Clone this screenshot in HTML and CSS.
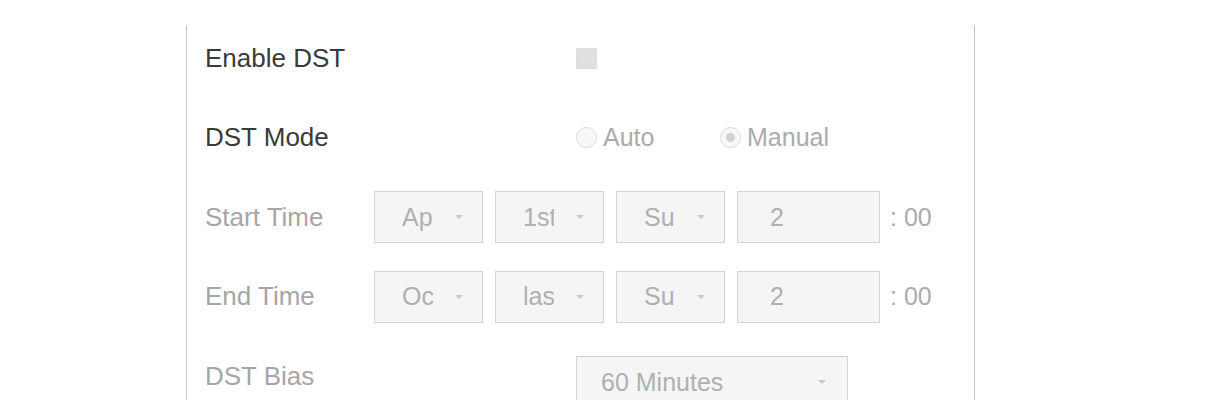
FILE: index.html
```html
<!DOCTYPE html>
<html lang="en">
<head>
  <meta charset="UTF-8" />
  <meta name="viewport" content="width=device-width, initial-scale=1.0"/>
  <title>DST Settings</title>
  <link rel="stylesheet" href="styles.css">
</head>
<body>

  <div class="panel">

    <div class="row">
      <div class="label">Enable DST</div>
      <div class="checkbox"></div>
    </div>

    <div class="row">
      <div class="label">DST Mode</div>
      <div class="radio-group">
        <div class="radio-option">
          <span class="radio"></span>
          <span class="option-text">Auto</span>
        </div>
        <div class="radio-option">
          <span class="radio checked"></span>
          <span class="option-text">Manual</span>
        </div>
      </div>
    </div>

    <!-- Начало / конец -->
    <div class="row">
      <div class="label label-short disabled">Start Time</div>
      <div class="select"><span class="select-text">April</span><span class="arrow"></span></div>
      <div class="select"><span class="select-text">1st</span><span class="arrow"></span></div>
      <div class="select"><span class="select-text">Sun</span><span class="arrow"></span></div>
      <div class="input">2</div>
      <span class="minutes">: 00</span>
    </div>

    <div class="row">
      <div class="label label-short disabled">End Time</div>
      <div class="select"><span class="select-text">Oct</span><span class="arrow"></span></div>
      <div class="select"><span class="select-text">last</span><span class="arrow"></span></div>
      <div class="select"><span class="select-text">Sun</span><span class="arrow"></span></div>
      <div class="input">2</div>
      <span class="minutes">: 00</span>
    </div>

    <div class="row row-bias">
      <div class="label disabled">DST Bias</div>
      <div class="select select-wide"><span class="select-text">60 Minutes</span><span class="arrow"></span></div>
    </div>

  </div>

</body>
</html>
```

FILE: styles.css
```css
body {
  margin: 0;
  background: #fff;
  font-family: "Liberation Sans", Arial, sans-serif;
  color: #333;
  overflow: hidden;
}

.panel {
  margin: 25px 0 0 186px;
  width: 789px;
  height: 375px;
  box-sizing: border-box;
  padding-top: 7px;
  border-left: 1px solid #c6c6c6;
  border-right: 1px solid #c6c6c6;
  overflow: hidden;
}

.row {
  display: flex;
  align-items: center;
  height: 52px;
  margin-bottom: 27.5px;
}

.label {
  width: 389px;
  padding-left: 18px;
  box-sizing: border-box;
  flex-shrink: 0;
  font-size: 26px;
  color: #3a3a3a;
}

.label-short {
  width: 187px;
}

.label.disabled {
  color: #a6a6a6;
}

.checkbox {
  width: 21px;
  height: 21px;
  box-sizing: border-box;
  background: #e0e0e0;
  border: 1px solid #dcdcdc;
}

.radio-group {
  display: flex;
}

.radio-option {
  display: flex;
  align-items: center;
  width: 144px;
}

.radio {
  width: 21px;
  height: 21px;
  box-sizing: border-box;
  border: 1px solid #dcdcdc;
  border-radius: 50%;
  background: #f7f7f7;
  display: flex;
  align-items: center;
  justify-content: center;
}

.radio.checked::after {
  content: "";
  width: 9px;
  height: 9px;
  border-radius: 50%;
  background: #d2d2d2;
}

.option-text {
  margin-left: 6px;
  font-size: 25px;
  color: #ababab;
}

.select,
.input {
  height: 52px;
  box-sizing: border-box;
  background: #f5f5f5;
  border: 1px solid #d4d4d4;
  display: flex;
  align-items: center;
  font-size: 25px;
  color: #b0b0b0;
}

.select {
  width: 109px;
  margin-right: 12px;
  padding-left: 27px;
}

.select-text {
  width: 31px;
  overflow: hidden;
  white-space: nowrap;
}

.arrow {
  margin-left: 22px;
  width: 0;
  height: 0;
  border-left: 4px solid transparent;
  border-right: 4px solid transparent;
  border-top: 4px solid #c8c8c8;
}

.input {
  width: 143px;
  padding-left: 32px;
}

.minutes {
  margin-left: 10px;
  font-size: 25px;
  color: #ababab;
}

.row-bias {
  margin-top: 3px;
}

.select-wide {
  align-self: flex-start;
  margin-top: 6px;
  width: 272px;
  padding: 0 21px 0 24px;
}

.select-wide .select-text {
  flex: 1;
  width: auto;
}

.select-wide .arrow {
  margin-left: 0;
}
```
